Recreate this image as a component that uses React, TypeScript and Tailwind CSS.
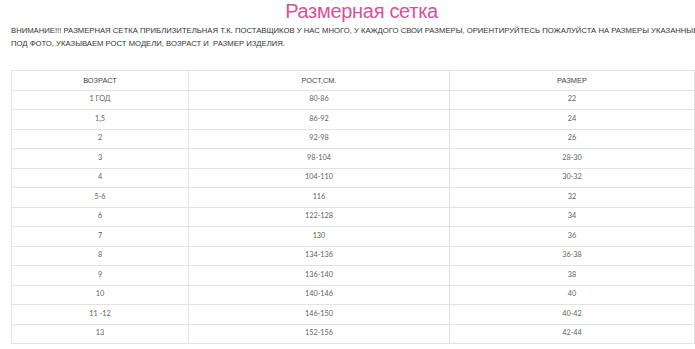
import React from 'react'

const rows: [string, string, string][] = [
  ['1 ГОД', '80-86', '22'],
  ['1,5', '86-92', '24'],
  ['2', '92-98', '26'],
  ['3', '98-104', '28-30'],
  ['4', '104-110', '30-32'],
  ['5-6', '116', '32'],
  ['6', '122-128', '34'],
  ['7', '130', '36'],
  ['8', '134-136', '36-38'],
  ['9', '136-140', '38'],
  ['10', '140-146', '40'],
  ['11 -12', '146-150', '40-42'],
  ['13', '152-156', '42-44'],
]

export default function App() {
  return (
    <div className="w-[695px] h-[349px] overflow-hidden bg-white font-['Liberation_Sans',Arial,sans-serif]">
      <h1 className="pl-[28px] text-center text-[20px] leading-[22px] tracking-[-0.3px] text-[#d9519b]">
        Размерная сетка
      </h1>

      <p className="mt-[2px] ml-[11px] w-[760px] text-[7.7px] leading-[13px] text-[#333]">
        ВНИМАНИЕ!!! РАЗМЕРНАЯ СЕТКА ПРИБЛИЗИТЕЛЬНАЯ Т.К. ПОСТАВЩИКОВ У НАС МНОГО, У КАЖДОГО СВОИ РАЗМЕРЫ, ОРИЕНТИРУЙТЕСЬ ПОЖАЛУЙСТА НА РАЗМЕРЫ УКАЗАННЫЕ
        <br />
        ПОД ФОТО, УКАЗЫВАЕМ РОСТ МОДЕЛИ, ВОЗРАСТ И&nbsp; РАЗМЕР ИЗДЕЛИЯ.
      </p>

      <table className="mt-[20px] ml-[11px] w-[684px] border-collapse table-fixed">
        <colgroup>
          <col className="w-[177px]" />
          <col className="w-[261px]" />
          <col />
        </colgroup>
        <thead>
          <tr className="h-[19.5px]">
            {['ВОЗРАСТ', 'РОСТ,СМ.', 'РАЗМЕР'].map((h) => (
              <th
                key={h}
                className="border border-[#e3e3e3] p-0 text-center align-middle text-[7.4px] font-normal text-[#444]"
              >
                {h}
              </th>
            ))}
          </tr>
        </thead>
        <tbody className="font-['Lato',sans-serif] text-[7.3px] text-[#5f5f5f]">
          {rows.map((r, i) => (
            <tr key={i} className="h-[19.5px]">
              {r.map((c, j) => (
                <td key={j} className="border border-[#e3e3e3] p-0 text-center align-middle">
                  {c}
                </td>
              ))}
            </tr>
          ))}
        </tbody>
      </table>
    </div>
  )
}
